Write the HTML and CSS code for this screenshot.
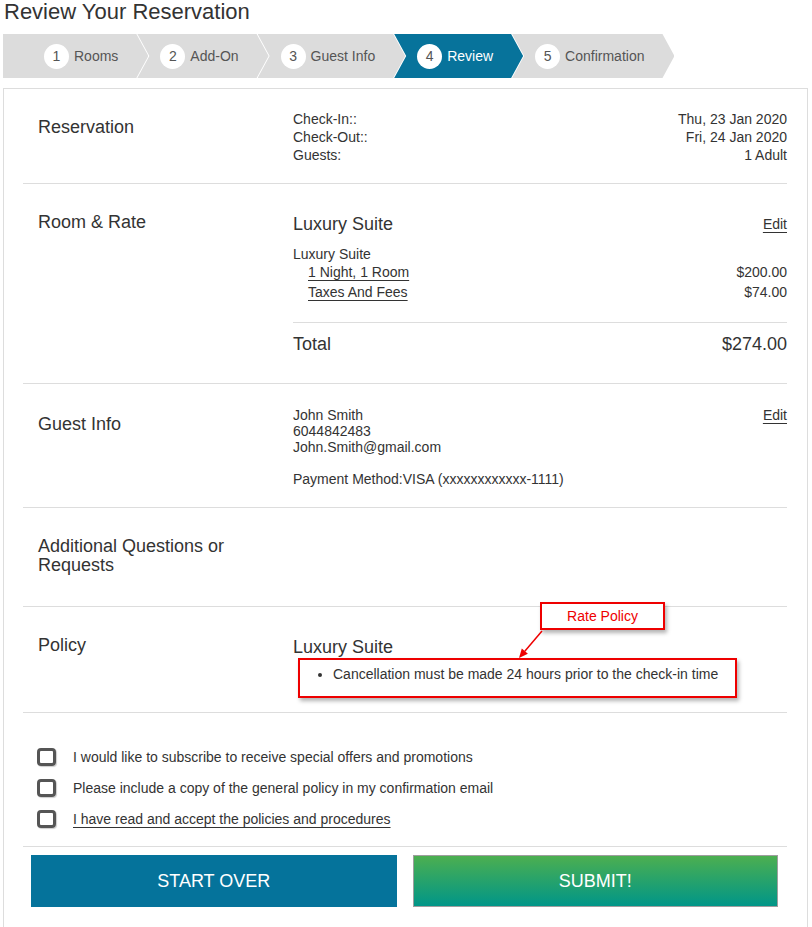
FILE: index.html
```html
<!DOCTYPE html>
<html lang="en">
<head>
  <meta charset="UTF-8">
  <title>Review Your Reservation</title>
  <link rel="stylesheet" href="styles.css">
</head>
<body>
  <h1 class="page-title">Review Your Reservation</h1>

  <ol class="steps">
    <li class="step step-first"><span class="step-num">1</span>Rooms</li>
    <li class="step"><span class="step-num">2</span>Add-On</li>
    <li class="step"><span class="step-num">3</span>Guest Info</li>
    <li class="step step-active"><span class="step-num">4</span>Review</li>
    <li class="step"><span class="step-num">5</span>Confirmation</li>
  </ol>

  <div class="review-card">
    <section class="review-row reservation-row">
      <h2 class="row-label">Reservation</h2>
      <div class="row-body">
        <div class="line"><span>Check-In::</span><span>Thu, 23 Jan 2020</span></div>
        <div class="line"><span>Check-Out::</span><span>Fri, 24 Jan 2020</span></div>
        <div class="line"><span>Guests:</span><span>1 Adult</span></div>
      </div>
    </section>

    <section class="review-row">
      <h2 class="row-label">Room &amp; Rate</h2>
      <div class="row-body">
        <div class="room-head">
          <h3 class="room-name">Luxury Suite</h3>
          <a class="edit-link" href="#">Edit</a>
        </div>
        <div class="rate-list">
          <div class="line">Luxury Suite</div>
          <div class="line line-price"><span class="price-label">1 Night, 1 Room</span><span>$200.00</span></div>
          <div class="line line-price"><span class="price-label">Taxes And Fees</span><span>$74.00</span></div>
        </div>
        <div class="total">
          <span>Total</span>
          <span>$274.00</span>
        </div>
      </div>
    </section>

    <section class="review-row guest-row">
      <h2 class="row-label">Guest Info</h2>
      <div class="row-body guest-body">
        <div class="guest-info">
          <div>John Smith</div>
          <div>6044842483</div>
          <div>John.Smith@gmail.com</div>
          <div class="payment">Payment Method:VISA (xxxxxxxxxxxx-1111)</div>
        </div>
        <a class="edit-link" href="#">Edit</a>
      </div>
    </section>

    <section class="review-row">
      <h2 class="row-label">Additional Questions or Requests</h2>
      <div class="row-body"></div>
    </section>

    <section class="review-row policy-row">
      <h2 class="row-label">Policy</h2>
      <div class="row-body">
        <h3 class="room-name">Luxury Suite</h3>
        <ul class="policy-list">
          <li>Cancellation must be made 24 hours prior to the check-in time</li>
        </ul>
      </div>

      <div class="note-box">Rate Policy</div>
      <svg class="note-arrow" width="40" height="40" viewBox="0 0 40 40">
        <line x1="29" y1="4" x2="11.8" y2="24.2" stroke="#e00" stroke-width="1.5"/>
        <polygon points="6,31 14.9,26.7 8.8,21.6" fill="#e00"/>
      </svg>
      <div class="note-highlight"></div>
    </section>

    <section class="checks">
      <label class="check"><input type="checkbox"><span>I would like to subscribe to receive special offers and promotions</span></label>
      <label class="check"><input type="checkbox"><span>Please include a copy of the general policy in my confirmation email</span></label>
      <label class="check"><input type="checkbox"><span class="check-link">I have read and accept the policies and procedures</span></label>
    </section>

    <div class="actions">
      <button class="btn btn-restart">START OVER</button>
      <button class="btn btn-submit">SUBMIT!</button>
    </div>
  </div>
</body>
</html>
```

FILE: styles.css
```css
body {
  margin: 0;
  padding: 0 4px 0 3px;
  font-family: "Liberation Sans", Arial, sans-serif;
  font-size: 14px;
  color: #333;
  background: #fff;
}
.page-title {
  margin: 0 0 10px 1px;
  font-size: 22px;
  line-height: 24px;
  font-weight: normal;
  color: #333;
}

/* progress steps */
.steps {
  display: flex;
  list-style: none;
  margin: 0 0 10px;
  padding: 0;
  height: 44px;
}
.step {
  display: flex;
  align-items: center;
  gap: 5px;
  padding: 0 30px 0 23px;
  margin-left: -11px;
  background: #dcdcdc;
  color: #555;
  font-size: 14px;
  clip-path: polygon(0 0, calc(100% - 12px) 0, 100% 50%, calc(100% - 12px) 100%, 0 100%, 12px 50%);
}
.step-first {
  margin-left: 0;
  padding-left: 41px;
  clip-path: polygon(0 0, calc(100% - 12px) 0, 100% 50%, calc(100% - 12px) 100%, 0 100%);
}
.step-active {
  background: #07739b;
  color: #fff;
}
.step-num {
  width: 25px;
  height: 25px;
  border-radius: 50%;
  background: #fff;
  color: #555;
  display: flex;
  align-items: center;
  justify-content: center;
}

/* card */
.review-card {
  border: 1px solid #ddd;
  border-bottom: none;
  padding: 0 20px 30px 19px;
}
.review-row {
  display: grid;
  grid-template-columns: 255px 1fr;
  padding: 21px 0 20px 15px;
  border-bottom: 1px solid #ddd;
}
.reservation-row {
  padding-bottom: 19px;
}
.guest-row {
  padding-top: 23px;
  padding-bottom: 20px;
}
.guest-row .row-label {
  padding-top: 8px;
}
.row-label {
  margin: 0;
  padding: 8px 0 11px;
  font-size: 18px;
  line-height: 19px;
  font-weight: normal;
  width: 200px;
}
.line {
  display: flex;
  justify-content: space-between;
  line-height: 18px;
}

.room-head {
  display: flex;
  justify-content: space-between;
  align-items: center;
  margin-top: 7px;
}
.room-name {
  margin: 0;
  font-size: 18px;
  line-height: 24px;
  font-weight: normal;
}
.policy-row .room-name {
  margin-top: 7px;
}
.edit-link {
  color: #333;
  text-decoration: underline;
  text-underline-offset: 3px;
  line-height: 16px;
}
.rate-list {
  margin-top: 9px;
  padding-bottom: 21px;
  border-bottom: 1px solid #ddd;
}
.line-price {
  padding-left: 15px;
}
.line-price + .line-price {
  margin-top: 2px;
}
.price-label {
  text-decoration: underline;
  text-underline-offset: 3px;
}
.total {
  display: flex;
  justify-content: space-between;
  font-size: 18px;
  line-height: 24px;
  padding-top: 9px;
  margin-bottom: 7px;
}

.guest-body {
  display: flex;
  justify-content: space-between;
  align-items: flex-start;
}
.guest-info {
  line-height: 16px;
}
.payment {
  margin-top: 16px;
}

.policy-row {
  position: relative;
}
.policy-list {
  margin: 6px 0 9px;
  padding-left: 40px;
  line-height: 18px;
}

/* annotation over the policy */
.note-box {
  position: absolute;
  left: 517px;
  top: -5px;
  width: 125px;
  height: 28px;
  box-sizing: border-box;
  border: 2px solid #e00;
  background: #fff;
  color: #e00;
  font-size: 14px;
  display: flex;
  align-items: center;
  justify-content: center;
  box-shadow: 2px 3px 4px rgba(0, 0, 0, 0.3);
}
.note-arrow {
  position: absolute;
  left: 490px;
  top: 20px;
}
.note-highlight {
  position: absolute;
  left: 275px;
  top: 51px;
  width: 439px;
  height: 40px;
  box-sizing: border-box;
  border: 2px solid #e00;
  box-shadow: 2px 3px 4px rgba(0, 0, 0, 0.3);
}

/* checkboxes */
.checks {
  padding: 28px 0 12px 14px;
  border-bottom: 1px solid #ddd;
}
.check {
  display: flex;
  align-items: center;
  height: 31px;
  gap: 17px;
}
.check input {
  appearance: none;
  margin: 0;
  width: 19px;
  height: 18px;
  border: 3px solid #555;
  border-radius: 4px;
  box-shadow: 1px 1px 1px rgba(0, 0, 0, 0.2);
}
.check-link {
  text-decoration: underline;
  text-underline-offset: 3px;
}

/* buttons */
.actions {
  display: flex;
  gap: 16px;
  padding: 8px 9px 0 8px;
}
.btn {
  flex: 1 1 0;
  box-sizing: border-box;
  height: 52px;
  border: 1px solid transparent;
  color: #fff;
  font-family: "Liberation Sans", Arial, sans-serif;
  font-size: 18px;
}
.btn-restart {
  background: #05739b;
  border-color: #05739b;
}
.btn-submit {
  background: linear-gradient(to bottom, #4caf50, #009688);
  border-color: #9e9e9e;
}
```
